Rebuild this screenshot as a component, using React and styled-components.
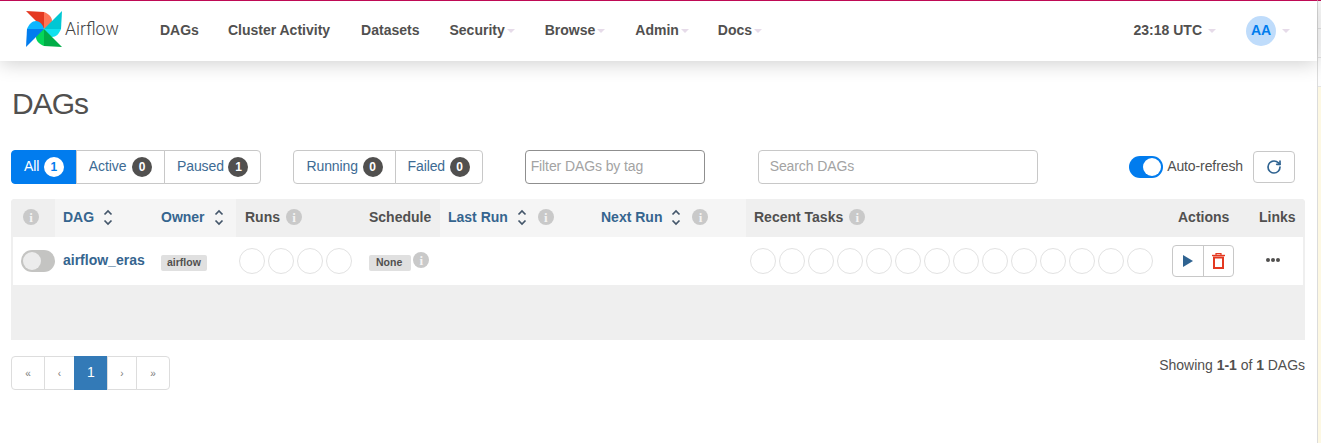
import React from 'react';
import styled, { createGlobalStyle } from 'styled-components';
import { RotateCw } from 'lucide-react';

const Global = createGlobalStyle`
  html, body { margin: 0; padding: 0; background: #fff; }
  body { font-family: "Liberation Sans", Arial, sans-serif; font-size: 14px; color: #51504f; overflow: hidden; }
  * { box-sizing: border-box; }
`;

const Shell = styled.div`
  display: flex;
  width: 1321px;
  height: 443px;
`;
const Main = styled.div`
  width: 1317px;
  flex: none;
`;
const Gutter = styled.div`
  flex: 1;
  border-left: 1px solid #dcdcdc;
  border-top: 1px solid #bf0a55;
  display: flex;
  flex-direction: column;
`;
const GutterCell = styled.div`
  height: 29px;
  background: #fdfdfd;
  border-bottom: 1px solid #e4e4e4;
  &:first-child { height: 28px; }
`;
const GutterFill = styled.div`
  flex: 1;
  background: #fdf8e3;
`;

const Nav = styled.nav`
  height: 61px;
  border-top: 1px solid #bf0a55;
  background: #fff;
  box-shadow: 0 2px 20px rgba(0,0,0,.2);
  display: flex;
  align-items: center;
  position: relative;
  padding-left: 26px;
`;
const Brand = styled.div`
  display: flex;
  align-items: center;
  width: 134px;
  flex: none;
  margin-top: -4px;
  font-family: Roboto, "Liberation Sans", sans-serif;
  font-size: 17.7px;
  font-weight: 300;
  color: #444;
`;
const BrandName = styled.span`
  margin-left: 3px;
`;
const NavItem = styled.div`
  display: flex;
  align-items: center;
  padding-bottom: 2px;
  font-weight: 700;
  font-size: 14px;
  color: #51504f;
  margin-right: ${p => p.$gap}px;
`;
const Caret = styled.span`
  display: inline-block;
  width: 0;
  height: 0;
  margin-left: ${p => p.$gap || 2}px;
  margin-top: 2px;
  border-left: 4px solid transparent;
  border-right: 4px solid transparent;
  border-top: 4px solid #e6dbe9;
`;
const Spacer = styled.div`flex: 1;`;
const Avatar = styled.div`
  width: 30px;
  height: 30px;
  border-radius: 50%;
  background: #bfdcfb;
  color: #017cee;
  font-weight: 700;
  font-size: 14px;
  padding-bottom: 2px;
  display: flex;
  align-items: center;
  justify-content: center;
`;
const NavRight = styled.div`
  display: flex;
  align-items: center;
  padding-right: 27px;
`;
const UserCaret = styled.div`
  display: flex;
  padding-bottom: 2px;
`;

const Content = styled.div`
  padding: 0 12px 0 11px;
`;
const Title = styled.h2`
  margin: 0;
  padding: 25px 0 0 1px;
  height: 89px;
  font-size: 30px;
  letter-spacing: -1px;
  line-height: 36px;
  font-weight: 400;
  color: #51504f;
`;
const Toolbar = styled.div`
  display: flex;
  align-items: center;
  height: 34px;
`;
const BtnGroup = styled.div`
  display: flex;
  height: 34px;
  margin-right: ${p => p.$gap || 0}px;
`;
const Seg = styled.div`
  display: flex;
  align-items: center;
  height: 34px;
  padding: 0 12px;
  border: 1px solid #c8c8c8;
  margin-left: -1px;
  color: ${p => p.$active ? '#fff' : '#3d6b94'};
  background: ${p => p.$active ? '#017cee' : '#fff'};
  border-color: ${p => p.$active ? '#017cee' : '#c8c8c8'};
  &:first-child { margin-left: 0; border-radius: 4px 0 0 4px; }
  &:last-child { border-radius: 0 4px 4px 0; }
`;
const SegLabel = styled.span`
  margin-top: -2px;
  letter-spacing: -0.1px;
`;
const Badge = styled.span`
  display: inline-flex;
  align-items: center;
  justify-content: center;
  width: 20px;
  height: 20px;
  margin-left: ${p => p.$ml ?? 4.6}px;
  padding-bottom: 1px;
  border-radius: 10px;
  background: ${p => p.$light ? '#fff' : '#51504f'};
  color: ${p => p.$light ? '#017cee' : '#fff'};
  font-size: 12px;
  font-weight: 700;
`;
const Field = styled.input`
  height: 34px;
  width: ${p => p.$w}px;
  margin-right: ${p => p.$gap}px;
  padding: ${p => p.$tag ? '0 0 3px 5px' : '0 11px 2px'};
  border: 1px solid ${p => p.$tag ? '#8f8f8f' : '#c8c8c8'};
  border-radius: 4px;
  font: 14px "Liberation Sans", Arial, sans-serif;
  letter-spacing: -0.1px;
  background: #fff;
  &::placeholder { color: #a3a3a3; opacity: 1; }
`;
const Switch = styled.span`
  display: inline-flex;
  align-items: center;
  justify-content: ${p => p.$on ? 'flex-end' : 'flex-start'};
  width: 34px;
  height: 22px;
  border-radius: 11px;
  background: ${p => p.$on ? '#017cee' : '#c4c4c2'};
  padding: ${p => p.$on ? '0 2px 0 0' : '0 0 0 2px'};
  flex: none;
`;
const Knob = styled.span`
  width: 18px;
  height: 18px;
  border-radius: 50%;
  background: ${p => p.$on ? '#fff' : '#ececec'};
`;
const RefreshLabel = styled.span`
  margin-left: 4px;
  margin-right: 10px;
  padding-bottom: 2px;
  letter-spacing: -0.1px;
`;
const RefreshBtn = styled.div`
  width: 42px;
  height: 32px;
  border: 1px solid #c8c8c8;
  border-radius: 4px;
  display: flex;
  align-items: center;
  justify-content: center;
  color: #2f6391;
`;
const ToolRight = styled.div`
  margin-left: auto;
  display: flex;
  align-items: center;
  padding-right: 10px;
`;

const Table = styled.div`
  margin-top: 15px;
  background: #efefef;
  border-radius: 4px 4px 0 0;
  height: 141px;
  padding: 0 2px;
  width: 1294px;
`;
const HeadRow = styled.div`
  display: grid;
  grid-template-columns: 44px 98px 83px 125px 79px 153px 153px 424px 81px 54px;
  margin: 0 -2px;
  height: 38px;
  background: #efefef;
  border-radius: 4px 4px 0 0;
`;
const Th = styled.div`
  display: flex;
  align-items: center;
  font-weight: 700;
  font-size: 14px;
  padding-left: ${p => p.$pl ?? 8}px;
  padding-bottom: 2px;
  background: ${p => p.$sort ? '#f5f5f5' : 'transparent'};
  color: ${p => p.$sort ? '#35658f' : '#51504f'};
`;
const BodyRow = styled.div`
  display: grid;
  grid-template-columns: 42px 98px 83px 125px 79px 153px 153px 424px 81px 52px;
  height: 48px;
  background: #fff;
`;
const Td = styled.div`
  display: flex;
  align-items: center;
  padding-left: ${p => p.$pl ?? 8}px;
`;
const DagLink = styled.span`
  font-weight: 700;
  color: #35658f;
  font-size: 14px;
  margin-bottom: 2px;
`;
const Tag = styled.span`
  display: inline-flex;
  align-items: center;
  height: 16px;
  padding: 0 ${p => p.$pr ?? 6}px 3px ${p => p.$pl ?? 6}px;
  margin-top: 4px;
  border-radius: 2px;
  background: #e0e0e0;
  color: #51504f;
  font-size: 10.5px;
  font-weight: 700;
`;
const InfoDot = styled.span`
  display: inline-flex;
  align-items: center;
  justify-content: center;
  width: 16px;
  height: 16px;
  margin-left: ${p => p.$ml ?? 6}px;
  margin-top: ${p => p.$mt ?? 0}px;
  border-radius: 50%;
  background: #c9c9c9;
  color: #f4f4f4;
  font-family: "Liberation Serif", serif;
  font-size: 13px;
  font-weight: 700;
  line-height: 1;
`;
const Circles = styled.div`
  display: flex;
  gap: 3px;
`;
const Circle = styled.span`
  width: 26px;
  height: 26px;
  border-radius: 50%;
  border: 1px solid #e2e2e2;
  background: #fff;
`;
const ActionGroup = styled.div`
  display: flex;
  height: 32px;
  margin-left: 2px;
  margin-bottom: 1px;
  border: 1px solid #c8c8c8;
  border-radius: 4px;
`;
const ActionBtn = styled.div`
  width: 30px;
  display: flex;
  align-items: center;
  justify-content: center;
  & + & { border-left: 1px solid #c8c8c8; }
`;
const Dots = styled.div`
  display: flex;
  gap: 1px;
  margin-left: 15px;
  margin-top: -2px;
`;
const Dot = styled.span`
  width: 4px;
  height: 4px;
  border-radius: 50%;
  background: #51504f;
`;

const Footer = styled.div`
  display: flex;
  justify-content: space-between;
  align-items: flex-start;
  margin-top: 16px;
  width: 1294px;
`;
const Pager = styled.div`
  display: flex;
  height: 34px;
`;
const PageCell = styled.div`
  display: flex;
  align-items: center;
  justify-content: center;
  width: ${p => p.$w}px;
  margin-left: -1px;
  padding-bottom: ${p => p.$active ? 2 : 0}px;
  border: 1px solid ${p => p.$active ? '#337ab7' : '#ddd'};
  background: ${p => p.$active ? '#337ab7' : '#fff'};
  color: ${p => p.$active ? '#fff' : '#7a7a7a'};
  font-size: ${p => p.$active ? 14 : 10}px;
  &:first-child { margin-left: 0; border-radius: 4px 0 0 4px; }
  &:last-child { border-radius: 0 4px 4px 0; }
`;
const Showing = styled.div`
  margin-top: 1px;
  color: #51504f;
  white-space: nowrap;
  letter-spacing: -0.03px;
`;
const SortIcon = styled.svg`
  margin-left: 9px;
  flex: none;
`;

const Sort = () => (
  <SortIcon width="10" height="17" viewBox="0 0 10 17" fill="none" stroke="#44566a" strokeWidth="1.7">
    <path d="M1.5 5.5 5 2l3.5 3.5M1.5 11.5 5 15l3.5-3.5" />
  </SortIcon>
);

const Blade = ({ angle, main, light }) => (
  <g transform={`rotate(${angle} 18 18)`}>
    <path d="M18 1C23 3 26 6 26 10 26 14 22 17 18 18Z" fill={light} />
    <path d="M0 0 18 1V18Z" fill={main} />
  </g>
);

const Logo = () => (
  <svg width="36" height="36" viewBox="0 0 36 36">
    <Blade angle={0} main="#e43921" light="#ff7557" />
    <Blade angle={90} main="#00c7d4" light="#11e1ee" />
    <Blade angle={180} main="#00ad46" light="#04d659" />
    <Blade angle={270} main="#017cee" light="#0cb6ff" />
  </svg>
);

const TrashIcon = () => (
  <svg width="13" height="16" viewBox="0 0 13 16" fill="none" stroke="#e43921">
    <path d="M0 2.5H13" strokeWidth="1.4" />
    <path d="M4 2V.7H9V2" strokeWidth="1.2" />
    <rect x="2" y="4.5" width="9" height="10.5" strokeWidth="2" />
  </svg>
);

const navItems = [
  ['DAGs', 29, false], ['Cluster Activity', 31, false], ['Datasets', 30, false],
  ['Security', 30, true], ['Browse', 30, true], ['Admin', 29, true], ['Docs', 0, true],
];

const circles = (n) => Array.from({ length: n }, (_, i) => <Circle key={i} />);
const Info = (props) => <InfoDot {...props}>i</InfoDot>;

export default function App() {
  return (
    <Shell>
      <Global />
      <Main>
        <Nav>
          <Brand>
            <Logo />
            <BrandName>Airflow</BrandName>
          </Brand>
          {navItems.map(([label, gap, caret]) => (
            <NavItem key={label} $gap={gap}>
              {label}
              {caret && <Caret />}
            </NavItem>
          ))}
          <Spacer />
          <NavRight>
            <NavItem $gap={30}>23:18 UTC<Caret $gap={6} /></NavItem>
            <Avatar>AA</Avatar>
            <UserCaret><Caret $gap={6} /></UserCaret>
          </NavRight>
        </Nav>
        <Content>
          <Title>DAGs</Title>
          <Toolbar>
            <BtnGroup $gap={32}>
              <Seg $active><SegLabel>All</SegLabel><Badge $light>1</Badge></Seg>
              <Seg><SegLabel>Active</SegLabel><Badge $ml={5.6}>0</Badge></Seg>
              <Seg><SegLabel>Paused</SegLabel><Badge>1</Badge></Seg>
            </BtnGroup>
            <BtnGroup $gap={42}>
              <Seg><SegLabel>Running</SegLabel><Badge>0</Badge></Seg>
              <Seg><SegLabel>Failed</SegLabel><Badge>0</Badge></Seg>
            </BtnGroup>
            <Field $tag $w={180} $gap={53} placeholder="Filter DAGs by tag" readOnly />
            <Field $w={280} $gap={0} placeholder="Search DAGs" readOnly />
            <ToolRight>
              <Switch $on><Knob $on /></Switch>
              <RefreshLabel>Auto-refresh</RefreshLabel>
              <RefreshBtn><RotateCw size={16} strokeWidth={2.5} /></RefreshBtn>
            </ToolRight>
          </Toolbar>
          <Table>
            <HeadRow>
              <Th $pl={12}><Info $ml={0} /></Th>
              <Th $sort>DAG<Sort /></Th>
              <Th $sort>Owner<Sort /></Th>
              <Th $pl={9}>Runs<Info /></Th>
              <Th>Schedule</Th>
              <Th $sort>Last Run<Sort /><Info $ml={11} /></Th>
              <Th $sort>Next Run<Sort /><Info $ml={11} /></Th>
              <Th>Recent Tasks<Info /></Th>
              <Th>Actions</Th>
              <Th>Links</Th>
            </HeadRow>
            <BodyRow>
              <Td $pl={8}><Switch><Knob /></Switch></Td>
              <Td><DagLink>airflow_eras</DagLink></Td>
              <Td><Tag>airflow</Tag></Td>
              <Td $pl={3}><Circles>{circles(4)}</Circles></Td>
              <Td><Tag $pl={7} $pr={9}>None</Tag><Info $ml={2} $mt={-2} /></Td>
              <Td />
              <Td />
              <Td $pl={4}><Circles>{circles(14)}</Circles></Td>
              <Td $pl={0}>
                <ActionGroup>
                  <ActionBtn>
                    <svg width="10" height="12" viewBox="0 0 10 12"><path d="M0 0 10 6 0 12Z" fill="#2f6391" /></svg>
                  </ActionBtn>
                  <ActionBtn><TrashIcon /></ActionBtn>
                </ActionGroup>
              </Td>
              <Td $pl={0}><Dots><Dot /><Dot /><Dot /></Dots></Td>
            </BodyRow>
          </Table>
          <Footer>
            <Pager>
              <PageCell $w={34}>«</PageCell>
              <PageCell $w={31}>‹</PageCell>
              <PageCell $w={34} $active>1</PageCell>
              <PageCell $w={30}>›</PageCell>
              <PageCell $w={34}>»</PageCell>
            </Pager>
            <Showing>Showing <b>1-1</b> of <b>1</b> DAGs</Showing>
          </Footer>
        </Content>
      </Main>
      <Gutter>
        <GutterCell />
        <GutterCell />
        <GutterCell />
        <GutterFill />
      </Gutter>
    </Shell>
  );
}
